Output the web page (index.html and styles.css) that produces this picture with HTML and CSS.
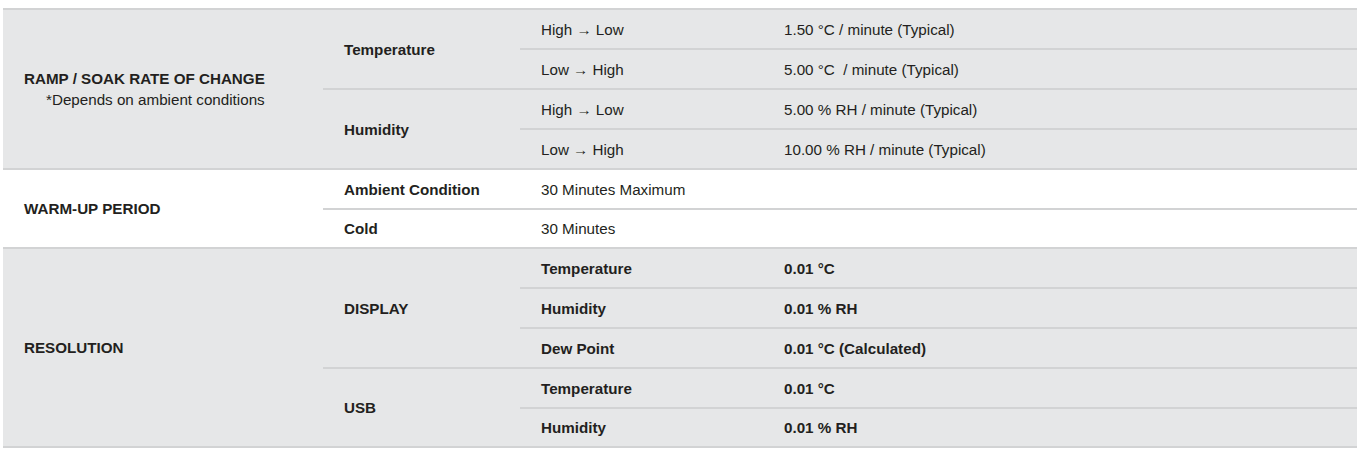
FILE: index.html
```html
<!DOCTYPE html>
<html>
<head>
<meta charset="utf-8">
<link rel="stylesheet" href="styles.css">
</head>
<body>
<table class="spec">
  <colgroup>
    <col class="c1"><col class="c2"><col class="c3"><col class="c4">
  </colgroup>
  <tbody class="grey">
    <tr>
      <td class="head" rowspan="4"><div class="title">RAMP / SOAK RATE OF CHANGE</div><div class="note">*Depends on ambient conditions</div></td>
      <td class="sub" rowspan="2">Temperature</td>
      <td>High → Low</td>
      <td>1.50 °C / minute (Typical)</td>
    </tr>
    <tr>
      <td>Low → High</td>
      <td>5.00 °C &nbsp;/ minute (Typical)</td>
    </tr>
    <tr>
      <td class="sub" rowspan="2">Humidity</td>
      <td>High → Low</td>
      <td>5.00 % RH / minute (Typical)</td>
    </tr>
    <tr>
      <td>Low → High</td>
      <td>10.00 % RH / minute (Typical)</td>
    </tr>
  </tbody>
  <tbody class="white">
    <tr>
      <td class="head" rowspan="2"><div class="title">WARM-UP PERIOD</div></td>
      <td class="sub">Ambient Condition</td>
      <td colspan="2">30 Minutes Maximum</td>
    </tr>
    <tr class="short">
      <td class="sub">Cold</td>
      <td colspan="2">30 Minutes</td>
    </tr>
  </tbody>
  <tbody class="grey bold">
    <tr>
      <td class="head" rowspan="5"><div class="title">RESOLUTION</div></td>
      <td class="sub" rowspan="3">DISPLAY</td>
      <td>Temperature</td>
      <td>0.01 °C</td>
    </tr>
    <tr>
      <td>Humidity</td>
      <td>0.01 % RH</td>
    </tr>
    <tr>
      <td>Dew Point</td>
      <td>0.01 °C (Calculated)</td>
    </tr>
    <tr>
      <td class="sub" rowspan="2">USB</td>
      <td>Temperature</td>
      <td>0.01 °C</td>
    </tr>
    <tr class="short">
      <td>Humidity</td>
      <td>0.01 % RH</td>
    </tr>
  </tbody>
</table>
</body>
</html>
```

FILE: styles.css
```css
html, body {
  margin: 0;
  padding: 0;
  background: #ffffff;
}

body {
  font-family: "Liberation Sans", Arial, sans-serif;
  font-size: 15.2px;
  color: #231f20;
}

.spec {
  margin: 8px 0 0 3px;
  width: 1354px;
  border-collapse: collapse;
  table-layout: fixed;
  border-top: 2px solid #d2d3d4;
}

.c1 { width: 320px; }
.c2 { width: 197px; }
.c3 { width: 243px; }
.c4 { width: 594px; }

.spec td {
  height: 38px;
  padding: 0 0 0 21px;
  border-bottom: 2px solid #d2d3d4;
  vertical-align: middle;
  line-height: 19px;
  white-space: nowrap;
}

.spec .short td {
  height: 37px;
}

.grey td {
  background: #e6e7e8;
}

.white td {
  background: #ffffff;
}

.spec td.head,
.spec td.sub {
  font-weight: bold;
}

.bold td {
  font-weight: bold;
}

.title {
  font-weight: bold;
}

.note {
  font-weight: normal;
  padding-left: 22px;
  margin-top: 2px;
}
```
